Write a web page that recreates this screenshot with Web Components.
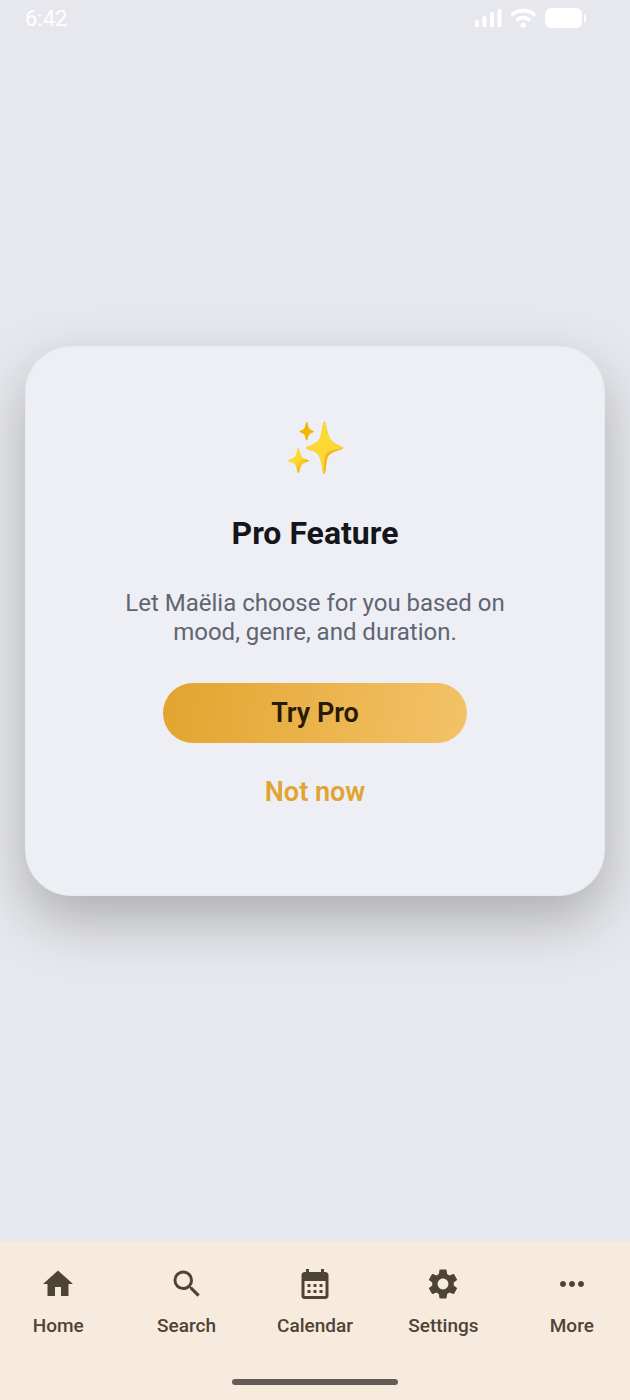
<!DOCTYPE html>
<html lang="en">
<head>
  <meta charset="utf-8">
  <meta name="viewport" content="width=device-width, initial-scale=1">
  <title>Maëlia</title>
  <style>
    body {
      margin: 0;
      font-family: Roboto, "Liberation Sans", sans-serif;
    }
  </style>
</head>
<body>
  <maelia-app></maelia-app>

  <template id="maelia-app">
    <style>
      :host {
        --accent: #e0a432;
        display: flex;
        flex-direction: column;
        min-height: 100vh;
        background: #e7e8ed;
      }

      status-bar {
        position: absolute;
        top: 0;
        left: 0;
        right: 0;
      }

      main {
        flex-grow: 1;
        display: flex;
        flex-direction: column;
        justify-content: center;
        padding: 0 25px;
      }
    </style>

    <status-bar>6:42</status-bar>

    <main>
      <pro-card>
        <span slot="title">Pro Feature</span>
        Let Maëlia choose for you based on mood, genre, and duration.
        <pro-button slot="actions" kind="filled">Try Pro</pro-button>
        <pro-button slot="actions">Not now</pro-button>
      </pro-card>
    </main>

    <nav-bar>
      <nav-item icon="home">Home</nav-item>
      <nav-item icon="search">Search</nav-item>
      <nav-item icon="calendar">Calendar</nav-item>
      <nav-item icon="settings">Settings</nav-item>
      <nav-item icon="more">More</nav-item>
    </nav-bar>
  </template>

  <template id="status-bar">
    <style>
      :host {
        display: flex;
        justify-content: space-between;
        align-items: center;
        height: 36px;
        padding: 0 43px 0 25px;
        color: white;
        font-size: 22px;
      }

      .icons {
        display: flex;
        align-items: center;
        gap: 8px;
      }

      svg {
        display: block;
        fill: currentColor;
      }
    </style>

    <span><slot></slot></span>
    <div class="icons">
      <svg width="28" height="20" viewBox="0 0 28 20" aria-hidden="true">
        <rect x="0" y="12" width="4" height="7.5" rx="1.8" />
        <rect x="7.5" y="8" width="4" height="11.5" rx="1.8" />
        <rect x="15" y="4" width="4" height="15.5" rx="1.8" />
        <rect x="22.5" y="1" width="4" height="18.5" rx="1.8" />
      </svg>
      <svg width="26" height="20" viewBox="0 0 26 20" aria-hidden="true">
        <g fill="none" stroke="currentColor" stroke-width="3.8" stroke-linecap="round">
          <path d="M1.5 6.4C7.4 1.400 17 1.400 22.900 6.400" />
          <path d="M6.500 11.600C9.700 9 14.700 9 17.900 11.600" />
        </g>
        <circle cx="12.2" cy="17" r="2.6" />
      </svg>
      <svg width="42" height="20" viewBox="0 0 42 20" aria-hidden="true">
        <rect width="37" height="20" rx="6" />
        <path d="M39 6c3 1 3 8 0 9z" />
      </svg>
    </div>
  </template>

  <template id="pro-card">
    <style>
      :host {
        display: flex;
        flex-direction: column;
        align-items: center;
        padding: 71px 71px 73px;
        border: 1px solid #e9eaee;
        border-radius: 46px;
        background: #eeeff4;
        box-shadow: 0 24px 56px rgba(0, 0, 0, 0.25);
        text-align: center;
      }

      svg {
        display: block;
      }

      h1 {
        margin: 35px 0 36px;
        color: #14161c;
        font-size: 32px;
        font-weight: 700;
        line-height: 40px;
      }

      p {
        margin: 0 0 36px;
        color: #606572;
        font-size: 24px;
        line-height: 29px;
      }

      .actions {
        display: flex;
        flex-direction: column;
        gap: 19px;
        width: 304px;
        max-width: 100%;
      }
    </style>

    <svg width="60" height="60" viewBox="0 0 60 60" aria-hidden="true">
      <defs>
        <linearGradient id="shine" x1="0" y1="0" x2="1" y2="1">
          <stop offset="0.5" stop-color="#fdd835" />
          <stop offset="0.75" stop-color="#f4b400" />
        </linearGradient>
      </defs>
      <path fill="#f4b61c" d="M39.4 3.5C41 3.5 42 16.500 46 22C49 26 58 28.500 58 30C58 32 47 33 43.500 38C40.500 43 41.500 56 39.400 56C37 56 37.500 43 33.500 37C30.500 32 21 32 21 30C21 28 31 27 34 22C37.500 16 37.500 3.500 39.400 3.500Z" />
      <path fill="#fdd835" d="M39.4 3.5C41 3.5 42 16.500 46 22C49 26 58 28.500 58 30C54 31.500 45 31 41.500 35.500C38 40 39.500 50 38.500 55C37 53 37 42 33.500 37C30.500 32 21 32 21 30C21 28 31 27 34 22C37.500 16 37.500 3.500 39.400 3.500Z" />
      <path fill="url(#shine)" d="M13.300 30C14.500 30 15 36.500 17 39C19 41.500 24 41.500 24 42.700C24 44 19 44 17 46.500C15 49 14.700 55 13.300 55C12 55 12 49 10 46.500C8 44 3 44 3 42.700C3 41.500 8 41 10 38.500C12 36 12 30 13.300 30Z" />
      <path fill="#f4b400" d="M21.800 4C23 4 22.800 8.500 24.300 10.500C25.800 12.500 29 12.500 29 13.500C29 14.700 26 14.700 24.300 16.500C22.800 18.300 23 22.500 21.800 22.500C20.600 22.500 20.700 18.300 19.200 16.500C17.600 14.700 14.500 14.700 14.500 13.500C14.500 12.400 17.600 12.400 19.200 10.500C20.700 8.500 20.600 4 21.800 4Z" />
    </svg>
    <h1><slot name="title"></slot></h1>
    <p><slot></slot></p>
    <div class="actions"><slot name="actions"></slot></div>
  </template>

  <template id="pro-button">
    <style>
      :host {
        display: block;
      }

      button {
        display: block;
        width: 100%;
        height: 60px;
        padding: 0;
        border: 0;
        border-radius: 30px;
        background: none;
        color: var(--accent);
        font: 600 27px/32px Roboto, "Liberation Sans", sans-serif;
        cursor: pointer;
      }

      :host([kind="filled"]) button {
        background: linear-gradient(100deg, #e2a42e, #f3c269);
        color: #281a04;
      }
    </style>

    <button type="button"><slot></slot></button>
  </template>

  <template id="nav-bar">
    <style>
      :host {
        display: flex;
        flex-direction: column;
        align-items: center;
        padding-bottom: 15px;
        background: #f7ebde;
      }

      nav {
        display: grid;
        grid-template-columns: repeat(5, 1fr);
        gap: 12px;
        width: 100%;
        padding: 25px 0 41px;
      }

      .handle {
        width: 166px;
        height: 6px;
        border-radius: 3px;
        background: #655c58;
      }
    </style>

    <nav><slot></slot></nav>
    <div class="handle"></div>
  </template>

  <template id="nav-item">
    <style>
      :host {
        display: block;
      }

      a {
        display: flex;
        flex-direction: column;
        align-items: center;
        gap: 12px;
        color: #4e4436;
        font-size: 19px;
        font-weight: 500;
        line-height: 24px;
        text-decoration: none;
      }

      svg {
        display: block;
        fill: currentColor;
      }
    </style>

    <a href="#">
      <svg width="36" height="36" viewBox="0 0 24 24" aria-hidden="true"><path /></svg>
      <span><slot></slot></span>
    </a>
  </template>

  <script>
    const ICONS = {
      home: 'M10 20v-6h4v6h5v-8h3L12 3 2 12h3v8z',
      search: 'M15.500 14h-.79l-.28-.27A6.471 6.471 0 0 0 16 9.500 6.500 6.500 0 1 0 9.500 16c1.610 0 3.090-.59 4.230-1.570l.27.28v.79l5 4.990L20.490 19l-4.990-5zm-6 0C7.010 14 5 11.990 5 9.500S7.010 5 9.500 5 14 7.010 14 9.500 11.990 14 9.500 14z',
      calendar: 'M19 4h-1V2h-2v2H8V2H6v2H5c-1.110 0-1.990.9-1.990 2L3 20a2 2 0 0 0 2 2h14c1.100 0 2-.9 2-2V6c0-1.100-.9-2-2-2zm0 16H5V10h14v10zM9 14H7v-2h2v2zm4 0h-2v-2h2v2zm4 0h-2v-2h2v2zm-8 4H7v-2h2v2zm4 0h-2v-2h2v2zm4 0h-2v-2h2v2z',
      settings: 'M19.14 12.94c.04-.3.06-.61.06-.94 0-.32-.02-.64-.07-.94l2.030-1.580c.18-.14.23-.41.12-.61l-1.920-3.320c-.12-.22-.37-.29-.59-.22l-2.390.96c-.5-.38-1.030-.7-1.620-.94l-.36-2.540c-.04-.24-.24-.41-.48-.41h-3.840c-.24 0-.43.17-.47.41l-.36 2.540c-.59.24-1.130.57-1.620.94l-2.390-.96c-.22-.08-.47 0-.59.22L2.740 8.870c-.12.21-.08.47.12.61l2.030 1.580c-.05.3-.09.63-.09.94s.02.64.07.94l-2.030 1.580c-.18.14-.23.41-.12.61l1.920 3.320c.12.22.37.29.59.22l2.390-.96c.5.38 1.030.7 1.620.94l.36 2.540c.05.24.24.41.48.41h3.840c.24 0 .44-.17.47-.41l.36-2.540c.59-.24 1.130-.56 1.620-.94l2.390.96c.22.08.47 0 .59-.22l1.920-3.320c.12-.22.07-.47-.12-.61l-2.010-1.580zM12 15.600c-1.980 0-3.600-1.620-3.600-3.600s1.620-3.600 3.600-3.600 3.600 1.620 3.600 3.600-1.620 3.600-3.600 3.600z',
      more: 'M6 10c-1.100 0-2 .9-2 2s.9 2 2 2 2-.9 2-2-.9-2-2-2zm12 0c-1.100 0-2 .9-2 2s.9 2 2 2 2-.9 2-2-.9-2-2-2zm-6 0c-1.100 0-2 .9-2 2s.9 2 2 2 2-.9 2-2-.9-2-2-2z'
    };

    class TemplateElement extends HTMLElement {
      constructor() {
        super();

        const shadowRoot = this.attachShadow({ mode: 'open' });
        const template = document.querySelector(`template#${this.localName}`);
        shadowRoot.appendChild(template.content.cloneNode(true));
      }
    }

    class NavItem extends TemplateElement {
      connectedCallback() {
        this.shadowRoot.querySelector('path').setAttribute('d', ICONS[this.getAttribute('icon')]);
      }
    }

    window.customElements.define('status-bar', class StatusBar extends TemplateElement {});
    window.customElements.define('pro-button', class ProButton extends TemplateElement {});
    window.customElements.define('pro-card', class ProCard extends TemplateElement {});
    window.customElements.define('nav-item', NavItem);
    window.customElements.define('nav-bar', class NavBar extends TemplateElement {});
    window.customElements.define('maelia-app', class MaeliaApp extends TemplateElement {});
  </script>
</body>
</html>
